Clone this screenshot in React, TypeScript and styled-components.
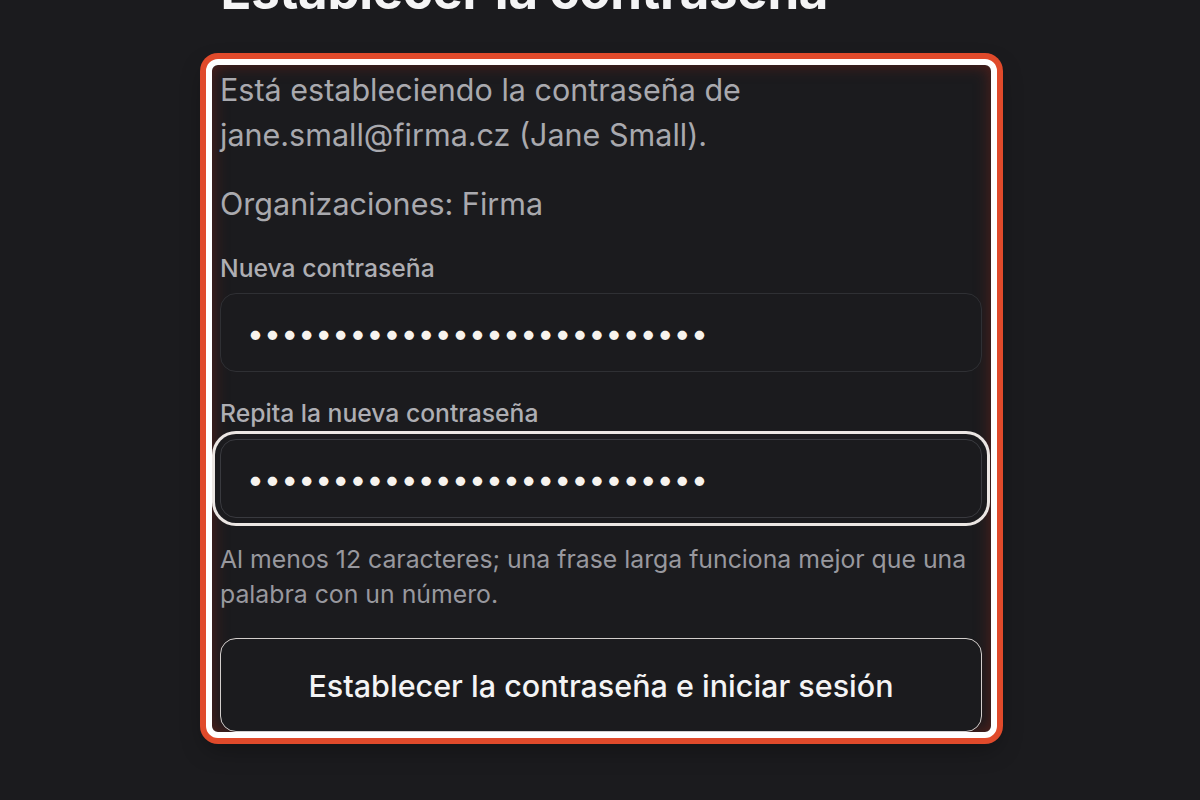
import React from 'react';
import styled, { createGlobalStyle } from 'styled-components';

const GlobalStyle = createGlobalStyle`
  html, body {
    margin: 0;
    padding: 0;
    background: #1b1b1e;
    font-family: Inter, "Noto Sans", "Liberation Sans", sans-serif;
    overflow: hidden;
  }
  * {
    box-sizing: border-box;
  }
`;

const Page = styled.main`
  width: 1200px;
  height: 800px;
  display: flex;
  flex-direction: column;
  align-items: center;
  padding-left: 3px;
`;

const Heading = styled.h1`
  width: 762px;
  margin: -40px 0 38px;
  font-size: 51px;
  line-height: 1.2;
  font-weight: 700;
  color: #f4f4f5;
  letter-spacing: -0.3px;
`;

const Card = styled.section`
  width: 791px;
  display: flex;
  flex-direction: column;
  padding: 2px 9px 0 8px;
  border: 6px solid #ffffff;
  border-radius: 12px;
  background: #1b1b1e;
  box-shadow: 0 0 0 6px #e04a2b, inset 0 0 16px rgba(120, 36, 24, 0.65),
    0 10px 24px rgba(0, 0, 0, 0.35);
`;

const Intro = styled.p<{ $gap?: number }>`
  margin: 0 0 ${(p) => p.$gap ?? 22}px;
  font-size: 30.5px;
  line-height: 45px;
  color: #a9a9ae;
`;

const Label = styled.label`
  display: block;
  margin: 6px 0 9px;
  font-size: 24.7px;
  line-height: 32px;
  font-weight: 500;
  color: #aeaeb3;
`;

const PasswordInput = styled.input<{ $focused?: boolean }>`
  display: block;
  width: 100%;
  height: 79px;
  margin: ${(p) => (p.$focused ? '1px 0 0' : '0 0 19px')};
  padding: 0 26px;
  border: 1.5px solid ${(p) => (p.$focused ? '#393a3f' : '#2f3034')};
  border-radius: 16px;
  background: #1b1b1e;
  color: #f7f3ee;
  font-family: Inter, "Liberation Sans", sans-serif;
  font-size: 30px;
  letter-spacing: 0.2px;
  outline: none;
  box-shadow: ${(p) =>
    p.$focused ? '0 0 0 5px #1b1b1e, 0 0 0 8px #ebe6e3' : 'none'};
`;

const Hint = styled.p`
  margin: 24px 0 26px;
  font-size: 24.8px;
  line-height: 35px;
  color: #98989e;
`;

const SubmitButton = styled.button`
  width: 100%;
  height: 94px;
  border: 1.5px solid #d3cecc;
  border-radius: 16px;
  background: #1b1b1e;
  color: #f4f4f5;
  font-family: Inter, "Liberation Sans", sans-serif;
  font-size: 30.5px;
  font-weight: 500;
  cursor: pointer;
`;

const PASSWORD = 'abcdefghijklmnopqrstuvwxyz1';

const App = () => {
  return (
    <Page>
      <GlobalStyle />
      <Heading>Establecer la contraseña</Heading>
      <Card>
        <Intro $gap={24}>
          Está estableciendo la contraseña de jane.small@firma.cz (Jane Small).
        </Intro>
        <Intro $gap={20}>Organizaciones: Firma</Intro>

        <Label htmlFor="pw1">Nueva contraseña</Label>
        <PasswordInput id="pw1" type="password" readOnly value={PASSWORD} />

        <Label htmlFor="pw2">Repita la nueva contraseña</Label>
        <PasswordInput
          id="pw2"
          type="password"
          readOnly
          $focused
          value={PASSWORD}
        />

        <Hint>
          Al menos 12 caracteres; una frase larga funciona mejor que una
          palabra con un número.
        </Hint>

        <SubmitButton type="button">
          Establecer la contraseña e iniciar sesión
        </SubmitButton>
      </Card>
    </Page>
  );
};

export default App;
